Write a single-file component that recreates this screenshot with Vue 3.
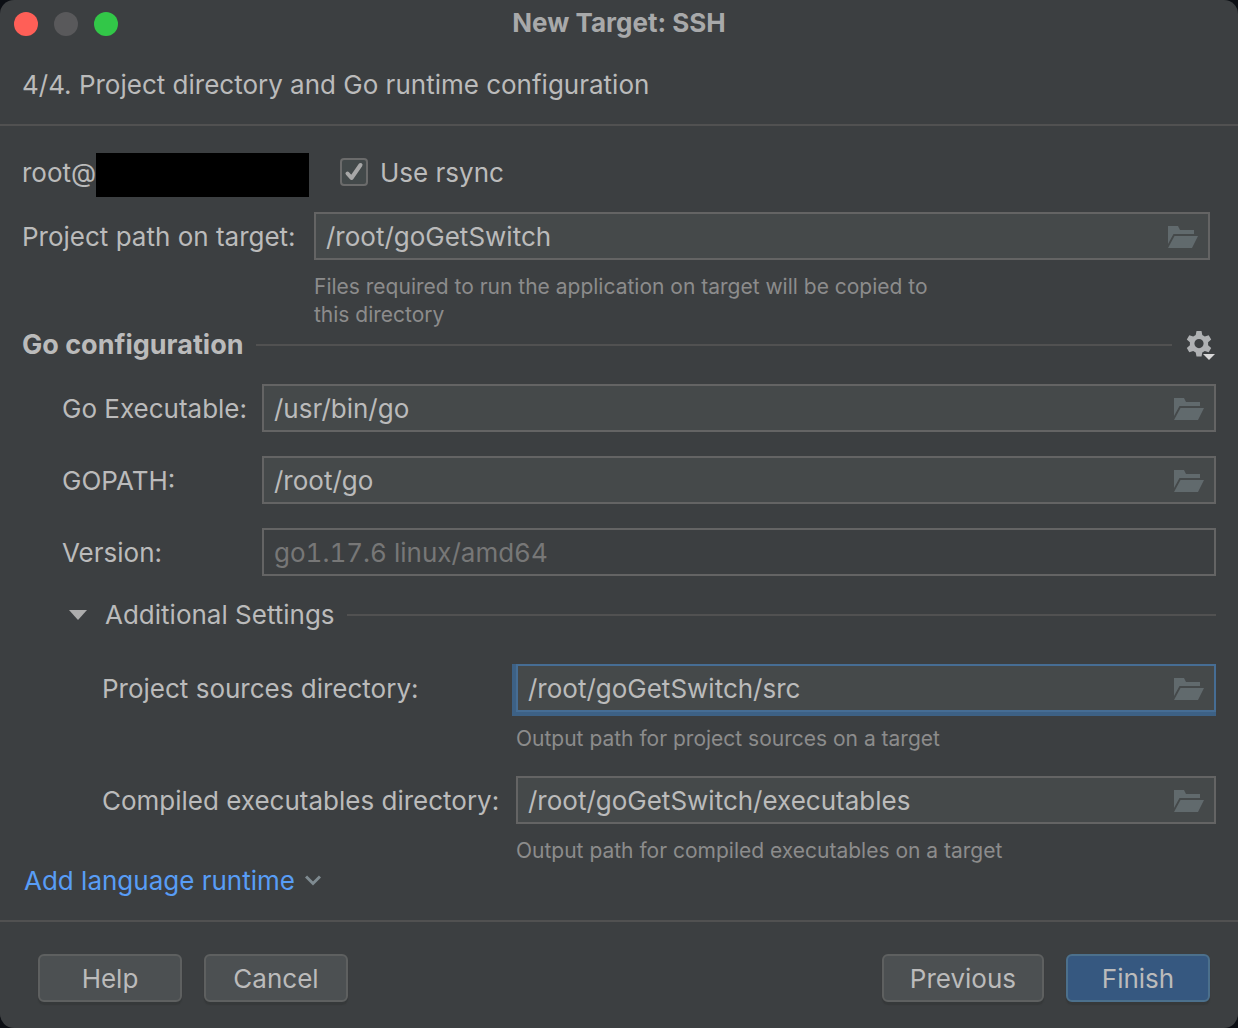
<script setup>
import { ref } from 'vue'

const useRsync = ref(true)
const projectPath = ref('/root/goGetSwitch')
const version = ref('go1.17.6 linux/amd64')

const runtimePaths = ref([
  { id: 'go-executable', label: 'Go Executable:', value: '/usr/bin/go' },
  { id: 'gopath', label: 'GOPATH:', value: '/root/go' },
])

const directories = ref([
  {
    id: 'sources',
    label: 'Project sources directory:',
    value: '/root/goGetSwitch/src',
    hint: 'Output path for project sources on a target',
    active: true,
  },
  {
    id: 'executables',
    label: 'Compiled executables directory:',
    value: '/root/goGetSwitch/executables',
    hint: 'Output path for compiled executables on a target',
    active: false,
  },
])
</script>

<template>
  <div class="backdrop">
    <main class="dialog">
      <header class="titlebar">
        <div class="lights">
          <button class="light close" type="button" aria-label="Close"></button>
          <button class="light minimize" type="button" aria-label="Minimize" disabled></button>
          <button class="light maximize" type="button" aria-label="Maximize"></button>
        </div>
        <h1 class="title">New Target: SSH</h1>
      </header>

      <p class="step">4/4. Project directory and Go runtime configuration</p>

      <form class="content" @submit.prevent>
        <div class="host">
          <span class="user">root@</span>
          <span class="redacted"></span>
          <label class="check">
            <input v-model="useRsync" class="check-input" type="checkbox" />
            <svg class="check-mark" viewBox="0 0 28 28" aria-hidden="true">
              <path v-if="useRsync" d="M7.500 15.500 11.500 20 20.500 7" />
            </svg>
            <span class="check-text">Use rsync</span>
          </label>
        </div>

        <div class="target">
          <label class="label" for="project-path">Project path on target:</label>
          <div class="field">
            <input id="project-path" v-model="projectPath" class="input" type="text" />
            <button class="browse" type="button" aria-label="Browse">
              <svg viewBox="0 0 30 22"><path d="M0 0h10l2 4h14v4H5.500L0 18z" /><path d="M6.500 10H30l-6 12H0z" /></svg>
            </button>
          </div>
          <p class="hint">Files required to run the application on target will be copied to this directory</p>
        </div>

        <div class="section">
          <h2 class="section-title">Go configuration</h2>
          <span class="rule"></span>
          <button class="gear" type="button" aria-label="Runtime options">
            <svg viewBox="0 0 30 30">
              <path
                class="cog"
                fill-rule="evenodd"
                d="M10.500 1h5l.8 4 2.500 1.500 3.900-1.300 2.500 4.300-3.100 2.700v3l3.100 2.700-2.500 4.300-3.900-1.300-2.500 1.500-.8 4h-5l-.8-4-2.500-1.500-3.900 1.300L.8 17.900l3.100-2.700v-3L.8 9.500l2.500-4.300 3.900 1.300L9.700 5zM13 9a4.600 4.600 0 1 0 0 9.200A4.600 4.600 0 1 0 13 9z"
              />
              <path class="cog-arrow" d="M17 24h12l-6 6z" />
            </svg>
          </button>
        </div>

        <div class="runtime">
          <template v-for="item in runtimePaths" :key="item.id">
            <label class="label" :for="item.id">{{ item.label }}</label>
            <div class="field">
              <input :id="item.id" v-model="item.value" class="input" type="text" />
              <button class="browse" type="button" aria-label="Browse">
                <svg viewBox="0 0 30 22"><path d="M0 0h10l2 4h14v4H5.500L0 18z" /><path d="M6.500 10H30l-6 12H0z" /></svg>
              </button>
            </div>
          </template>
          <label class="label" for="version">Version:</label>
          <div class="field disabled">
            <input id="version" v-model="version" class="input" type="text" disabled />
          </div>
        </div>

        <div class="additional">
          <button class="toggle" type="button" aria-expanded="true">
            <svg class="triangle" viewBox="0 0 18 10"><path d="M0 0h18L9 10z" /></svg>
            Additional Settings
          </button>
          <span class="rule"></span>
        </div>

        <div class="directories">
          <template v-for="item in directories" :key="item.id">
            <label class="label" :for="item.id">{{ item.label }}</label>
            <div class="field" :class="{ active: item.active }">
              <input :id="item.id" v-model="item.value" class="input" type="text" />
              <button class="browse" type="button" aria-label="Browse">
                <svg viewBox="0 0 30 22"><path d="M0 0h10l2 4h14v4H5.500L0 18z" /><path d="M6.500 10H30l-6 12H0z" /></svg>
              </button>
            </div>
            <p class="hint">{{ item.hint }}</p>
          </template>
        </div>

        <a class="add" href="#">
          Add language runtime
          <svg class="chevron" viewBox="0 0 16 12"><path d="M1 1.500l7 7 7-7" /></svg>
        </a>
      </form>

      <footer class="actions">
        <button class="button" type="button">Help</button>
        <button class="button" type="button">Cancel</button>
        <button class="button previous" type="button">Previous</button>
        <button class="button primary" type="button">Finish</button>
      </footer>
    </main>
  </div>
</template>

<style>
body {
  background: #0c0f14;
}
</style>

<style scoped>
.backdrop {
  overflow: hidden;
  font-family: Inter, 'Liberation Sans', sans-serif;
  font-size: 26px;
  line-height: 32px;
  color: #bbbbbb;
}

.backdrop *,
.backdrop {
  box-sizing: border-box;
}

.dialog {
  display: flex;
  flex-direction: column;
  min-height: 100vh;
  background: #3c3f41;
  border-radius: 14px;
  overflow: hidden;
}

h1,
h2,
p {
  margin: 0;
  font-size: inherit;
}

button,
input {
  margin: 0;
  padding: 0;
  border: 0;
  background: none;
  font: inherit;
  color: inherit;
}

svg {
  display: block;
}

.titlebar {
  display: grid;
  grid-template-columns: 1fr auto 1fr;
  align-items: center;
  height: 48px;
  padding: 0 14px;
}

.lights {
  display: flex;
  gap: 16px;
}

.light {
  width: 24px;
  height: 24px;
  border-radius: 50%;
}

.close {
  background: #ff5f57;
}

.minimize {
  background: #59595b;
}

.maximize {
  background: #32c748;
}

.title {
  font-weight: 700;
  line-height: 46px;
  align-self: start;
  color: #a8a9aa;
}

.step {
  padding: 21px 22px 23px;
  border-bottom: 2px solid #515151;
}

.content {
  flex: 1;
  padding: 26px 22px 0;
}

.host {
  display: flex;
  align-items: center;
  height: 46px;
}

.user {
  width: 74px;
  margin-bottom: 4px;
}

.redacted {
  width: 213px;
  height: 44px;
  background: #000;
}

.check {
  display: grid;
  grid-template-columns: 28px auto;
  align-items: center;
  column-gap: 12px;
  margin: 0 0 6px 31px;
}

.check-text {
  padding-top: 2px;
}

.check-input {
  grid-area: 1 / 1;
  appearance: none;
  width: 28px;
  height: 28px;
  border: 2px solid #6b6b6b;
  border-radius: 4px;
  background: #43494a;
}

.check-mark {
  grid-area: 1 / 1;
  width: 28px;
  height: 28px;
  fill: none;
  stroke: #a7a7a7;
  stroke-width: 4;
  stroke-linecap: round;
  stroke-linejoin: round;
  pointer-events: none;
}

.target {
  display: grid;
  grid-template-columns: 292px 1fr;
  align-items: center;
  margin: 14px 6px 0 0;
}

.label {
  padding-top: 2px;
}

.field {
  display: flex;
  align-items: center;
  height: 48px;
  padding: 0 10px;
  border: 2px solid #646464;
  background: #45494a;
}

.field.disabled {
  background: none;
  color: #777777;
}

.field.disabled .input {
  font-variant-numeric: tabular-nums;
}

.field.active {
  border-color: #466d94;
  box-shadow: -4px 0 #3d6185, 0 4px #3d6185, -4px 4px #3d6185;
}

.input {
  flex: 1;
  min-width: 0;
  height: 44px;
  outline: none;
}

.browse {
  width: 30px;
  padding-top: 2px;
  fill: #616a6d;
}

.hint {
  grid-column: 2;
  max-width: 650px;
  padding-top: 13px;
  font-size: 21px;
  line-height: 28px;
  color: #8c8c8c;
}

.section {
  display: flex;
  align-items: center;
  gap: 12px;
  height: 32px;
}

.section-title {
  font-size: 27px;
  font-weight: 700;
}

.rule {
  flex: 1;
  height: 2px;
  background: #515151;
}

.gear {
  width: 30px;
  height: 30px;
  margin-left: 2px;
}

.cog {
  fill: #afb1b3;
}

.cog-arrow {
  fill: #d8d8d8;
}

.runtime {
  display: grid;
  grid-template-columns: 200px 1fr;
  align-items: center;
  row-gap: 24px;
  margin: 23px 0 0 40px;
}

.additional {
  display: flex;
  align-items: center;
  gap: 12px;
  margin: 23px 0 0 47px;
}

.toggle {
  display: flex;
  align-items: center;
  gap: 18px;
}

.triangle {
  width: 18px;
  height: 10px;
  fill: #adadad;
}

.directories {
  display: grid;
  grid-template-columns: 414px 1fr;
  align-items: center;
  margin: 33px 0 0 80px;
}

.directories .hint {
  padding-bottom: 23px;
}

.directories .hint:last-child {
  padding-bottom: 0;
}

.add {
  display: flex;
  align-items: center;
  gap: 10px;
  width: max-content;
  margin: 0 0 23px 2px;
  color: #589df6;
  text-decoration: none;
}

.chevron {
  width: 16px;
  height: 12px;
  fill: none;
  stroke: #7f8b91;
  stroke-width: 3;
}

.actions {
  display: flex;
  gap: 22px;
  padding: 32px 28px 26px 38px;
  border-top: 2px solid #515151;
}

.button {
  min-width: 144px;
  height: 48px;
  padding: 2px 26px 0;
  border: 2px solid #5e6060;
  border-radius: 6px;
  background: #4c5052;
  box-shadow: 0 3px 1px #36393a;
}

.previous {
  margin-left: auto;
}

.primary {
  border-color: #4c708c;
  background: #365880;
}
</style>
